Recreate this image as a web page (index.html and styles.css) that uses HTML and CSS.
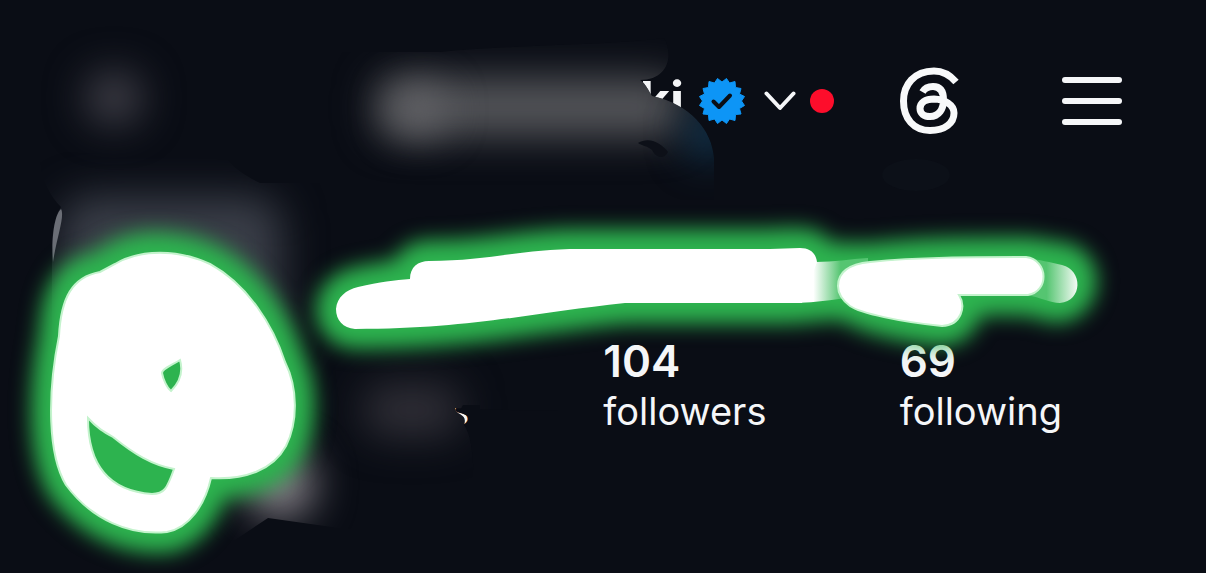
FILE: index.html
```
<!DOCTYPE html>
<html lang="en">
<head>
    <meta charset="UTF-8">
    <meta name="viewport" content="width=device-width, initial-scale=1.0">
    <title>Profile</title>
    <link rel="stylesheet" href="styles.css">
</head>
<body>
    <div class="profile">
        <header class="topbar">
            <button class="account" aria-label="Switch account">
                <span class="username">ki</span>
                <svg class="verified" viewBox="0 0 48 48">
                    <path fill="#0d95f6" stroke="#0d95f6" stroke-width="1" stroke-linejoin="round" d="M24 5L28.500 1.500L31.500 6L37 4.500L37.500 10.500L43 11.500L41.500 17L46.500 19.500L43.500 24L46.500 28.500L41.500 31.500L43 37L37.500 37.500L37 43.500L31.500 42L28.500 46.500L24 43L19.500 46.500L16.500 42L11 43.500L10.500 37.500L5 37L6.500 31.500L1.500 28.500L4.500 24L1.500 19.500L6.500 17L5 11.500L10.500 10.500L11 4.500L16.500 6L19.500 1.500Z"/>
                    <path fill="none" stroke="#0a0e16" stroke-width="4" stroke-linecap="round" stroke-linejoin="round" d="M15.500 24.500L21 30L32 18.500"/>
                </svg>
                <svg class="chevron" viewBox="0 0 32 20">
                    <path d="M2.500 2.500L16 17L29.500 2.500"/>
                </svg>
                <span class="dot"></span>
            </button>
            <button class="threads" aria-label="Threads">
                <svg viewBox="0 0 60 68">
                    <path d="M56 15C50 8 42 4 34 4C14 4 3.500 18 3.500 34C3.500 52 14 63.500 30 63.500C45 63.500 54 56 54 46C54 38 45 32.500 34 32C25 32 20 36 20 41.500C20 46.500 24 49.500 30 49.500C39 49.500 43.500 42 43.500 33C43.500 24 40 19.500 33 19.500C28 19.500 24.500 21.500 22.500 25"/>
                </svg>
            </button>
            <button class="menu" aria-label="Menu">
                <span></span>
                <span></span>
                <span></span>
            </button>
        </header>

        <div class="stats">
            <a href="#" class="stat">
                <strong></strong>
                <span>posts</span>
            </a>
            <a href="#" class="stat">
                <strong>104</strong>
                <span>followers</span>
            </a>
            <a href="#" class="stat">
                <strong>69</strong>
                <span>following</span>
            </a>
        </div>

        <!-- smudges and marker drawn over the private parts -->
        <svg class="markup" viewBox="0 0 1206 573" aria-hidden="true">
            <defs>
                <filter id="soft" filterUnits="userSpaceOnUse" x="0" y="0" width="1206" height="573" color-interpolation-filters="sRGB">
                    <feGaussianBlur stdDeviation="20"/>
                </filter>
                <filter id="glow" filterUnits="userSpaceOnUse" x="0" y="150" width="1206" height="423" color-interpolation-filters="sRGB">
                    <feGaussianBlur stdDeviation="10"/>
                </filter>
                <linearGradient id="fade-out">
                    <stop offset="0.3" stop-color="#fff"/>
                    <stop offset="0.65" stop-color="#55c571"/>
                </linearGradient>
                <linearGradient id="fade-in">
                    <stop offset="0.4" stop-color="#55c571"/>
                    <stop offset="1" stop-color="#f4fbf5"/>
                </linearGradient>
                <clipPath id="name-area">
                    <path d="M300 52H440C520 44 600 46 664 38C674 56 668 80 640 80C646 84 648 90 652 96C690 104 712 130 714 158V200H300Z"/>
                </clipPath>
                <clipPath id="avatar-area">
                    <path d="M40 150L228 160C236 170 246 176 260 183H360V531L268 518L235 540H52V250C52 228 56 214 61 207C50 196 42 180 40 165Z"/>
                </clipPath>
                <clipPath id="posts-area">
                    <path d="M300 320H560V411L467 409L455 408C456 416 468 413 464 425C470 434 474 446 474 500H300Z"/>
                </clipPath>
            </defs>

            <ellipse cx="114" cy="98" rx="28" ry="26" fill="#44434c" filter="url(#soft)"/>

            <g clip-path="url(#name-area)">
                <rect class="cover" x="300" y="30" width="420" height="170"/>
                <rect x="376" y="78" width="306" height="58" rx="20" fill="#56575b" filter="url(#soft)"/>
                <ellipse cx="418" cy="110" rx="26" ry="24" fill="#66666a" filter="url(#soft)"/>
                <ellipse cx="708" cy="134" rx="20" ry="24" fill="#14405f" filter="url(#soft)"/>
                <path d="M638 143C650 136 662 144 668 152C664 160 656 158 652 150C648 146 642 146 638 143Z" fill="#0d1018"/>
            </g>

            <g clip-path="url(#avatar-area)">
                <rect x="60" y="196" width="222" height="150" rx="30" fill="#3a3e48" filter="url(#soft)"/>
                <ellipse cx="280" cy="484" rx="34" ry="34" fill="#8c878e" filter="url(#soft)"/>
            </g>
            <path d="M53 262C51 236 55 214 61 209C65 216 57 236 53 262Z" fill="#6b6e76"/>

            <g clip-path="url(#posts-area)">
                <rect class="cover" x="366" y="340" width="194" height="130"/>
                <rect x="364" y="384" width="96" height="52" rx="18" fill="#302f37" filter="url(#soft)"/>
            </g>
            <!-- only a sliver of the last letter stays clear -->
            <path class="cover" d="M459 412L470 417V430H480V405H463Z"/>
            <ellipse cx="916" cy="175" rx="34" ry="16" fill="#0c1018"/>

            <g class="glow" filter="url(#glow)">
                <path d="M115 263C140 247 178 249 210 264C248 285 273 325 285 362C298 388 298 422 286 446C273 470 245 480 211 478C205 505 189 528 167 533C130 536 92 520 66 485C48 455 47 395 59 336C61 294 72 275 100 272Z"/>
                <path d="M336 309C337 297 346 290 358 287C380 282 395 280 410 279C410 267 418 260 429 260C490 261 520 249 580 249H770C812 246 814 248 817 262L870 263C920 257 970 257 1026 257L1065 263C1084 270 1080 302 1056 303L1030 296L960 295C966 306 960 325 942 326C900 322 860 312 846 299L790 304H625C530 313 470 329 355 329C343 328 336 320 336 309Z"/>
            </g>

            <path d="M790 262H816C834 262 850 259 868 258V296C840 298 820 303 790 303Z" fill="url(#fade-out)"/>
            <path d="M1026 258C1040 260 1050 262 1062 265C1083 270 1083 301 1060 303C1050 303 1040 297 1026 295Z" fill="url(#fade-in)"/>
            <g class="marker">
                <path fill-rule="evenodd" d="M115 264C140 249 178 249 210 264C248 285 273 325 285 362C298 388 298 422 286 446C273 470 245 480 211 478C205 505 189 528 167 532C130 536 92 520 66 485C48 455 47 395 59 336C61 298 72 277 100 272Z
                M88 418C97 428 104 432 113 437C134 454 152 465 174 469C167 489 164 494 152 494C110 491 88 466 88 418Z
                M180 360C172 365 162 369 162 373C163 379 167 388 171 391C178 384 184 374 180 360Z"/>
                <path class="line" d="M336 309C337 297 346 290 358 287C380 282 395 280 410 279C410 267 418 261 429 261C490 261 520 249 580 249H770L800 248C811 248 816 254 817 262L802 303H625C530 313 470 329 355 329C343 328 336 320 336 309Z"/>
                <path d="M838 286C838 272 850 264 870 262C920 257 970 257 1026 257C1049 260 1049 292 1028 295H959C966 306 962 325 942 326C900 322 860 313 850 306C842 300 838 294 838 286Z"/>
            </g>
        </svg>
    </div>
</body>
</html>
```
FILE: styles.css
```
* {
    margin: 0;
    padding: 0;
    box-sizing: border-box;
}
body {
    background-color: #0a0d15;
    color: #f5f6f8;
    font-family: Inter, "Liberation Sans", sans-serif;
}
.profile {
    position: relative;
    min-height: 100vh;
    padding: 64px 84px 0 84px;
    overflow: hidden;
}
.topbar {
    display: flex;
    justify-content: flex-end;
    align-items: center;
    height: 74px;
}
button {
    background: none;
    border: none;
    color: inherit;
    font-family: inherit;
    cursor: pointer;
}
.account {
    display: flex;
    align-items: center;
    margin-right: 66px;
}
.username {
    font-size: 52px;
    font-weight: 700;
    line-height: 56px;
    margin-right: 14px;
}
.verified {
    width: 48px;
    height: 48px;
    margin-right: 18px;
}
.chevron {
    width: 32px;
    height: 20px;
    margin-right: 14px;
}
.chevron path {
    fill: none;
    stroke: #f5f6f8;
    stroke-width: 4;
    stroke-linecap: round;
    stroke-linejoin: round;
}
.dot {
    width: 24px;
    height: 24px;
    border-radius: 50%;
    background-color: #fd0d2b;
}
.threads {
    width: 60px;
    height: 68px;
    margin-right: 102px;
}
.threads svg {
    display: block;
}
.threads path {
    fill: none;
    stroke: #f8f9fa;
    stroke-width: 7;
}
.menu {
    display: flex;
    flex-direction: column;
    gap: 15px;
    width: 60px;
}
.menu span {
    height: 6px;
    border-radius: 3px;
    background-color: #f5f6f8;
}
.stats {
    display: grid;
    grid-template-columns: 232fr 296fr 222fr;
    margin-top: 198px;
    padding-left: 287px;
}
.stat {
    display: flex;
    flex-direction: column;
    color: inherit;
    text-decoration: none;
}
.stat strong {
    height: 52px;
    font-size: 44px;
    font-weight: 600;
    line-height: 50px;
}
.stat span {
    font-size: 38px;
    line-height: 46px;
}
.markup {
    position: absolute;
    top: 0;
    left: 0;
    width: 100%;
    pointer-events: none;
}
.cover {
    fill: #0a0d15;
}
.glow {
    fill: #2db34f;
    stroke: #2db34f;
    stroke-width: 40;
    stroke-linejoin: round;
}
.marker {
    fill: #fff;
    stroke: #c4f3cd;
    stroke-width: 2;
}
.marker .line {
    stroke: none;
}
```
